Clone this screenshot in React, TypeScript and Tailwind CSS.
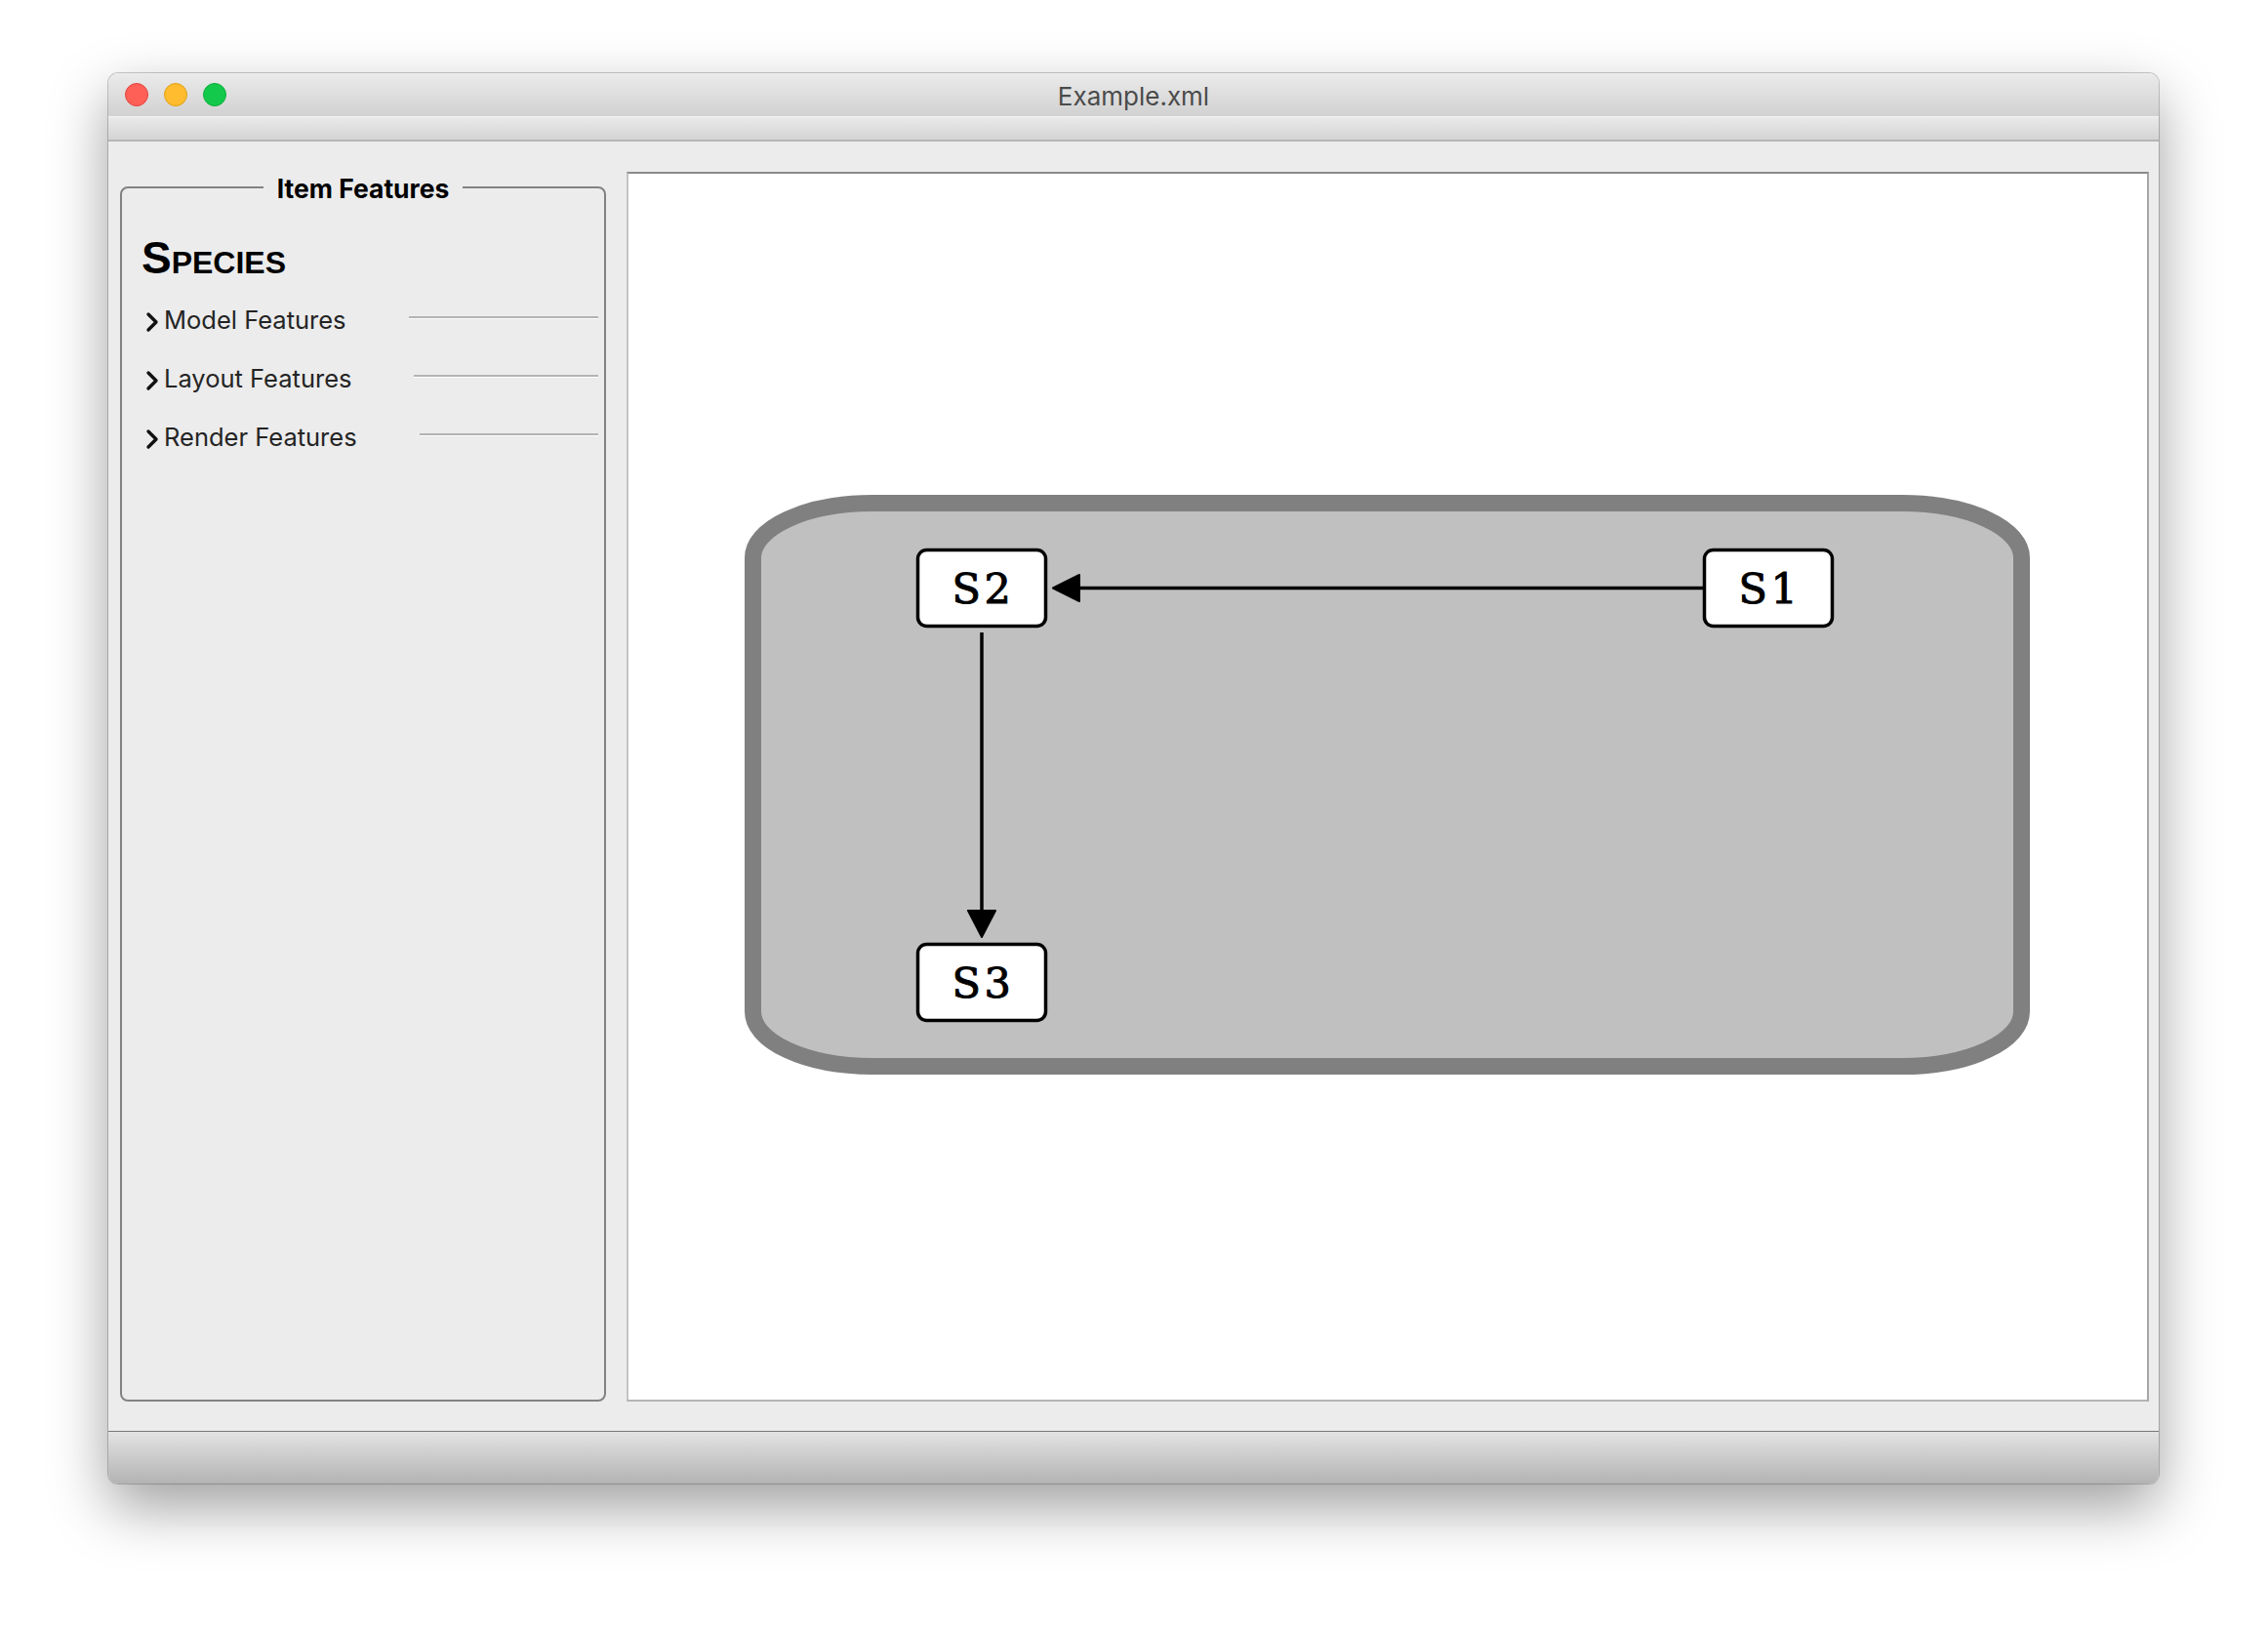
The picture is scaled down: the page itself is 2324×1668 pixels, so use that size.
import React from "react";

const sections = ["Model Features", "Layout Features", "Render Features"];

const Chevron: React.FC = () => (
  <svg width="14" height="22" viewBox="0 0 14 22" className="shrink-0 mt-[3px]">
    <path d="M3 3 L11 11 L3 19" fill="none" stroke="#111" strokeWidth="3.4" strokeLinecap="round" strokeLinejoin="round" />
  </svg>
);

const TrafficLights: React.FC = () => (
  <div className="flex items-center gap-[16px]">
    <span className="w-[24px] h-[24px] rounded-full bg-[#fe5f57] border border-[#e2463f]" />
    <span className="w-[24px] h-[24px] rounded-full bg-[#febc2e] border border-[#e1a116]" />
    <span className="w-[24px] h-[24px] rounded-full bg-[#13c94b] border border-[#10ad3c]" />
  </div>
);

// diagram coords are relative to the canvas content box
const Diagram: React.FC = () => (
  <svg className="absolute left-0 top-0" width="1554" height="1254" viewBox="0 0 1554 1254">
    <rect x="127.5" y="337.5" width="1300" height="577" rx="122" ry="56" fill="#c0c0c0" stroke="#808080" strokeWidth="17" />

    <line x1="1102" y1="424.5" x2="462" y2="424.5" stroke="#000" strokeWidth="3.5" />
    <polygon points="435,424.5 462,411 462,438" fill="#000" stroke="#000" strokeWidth="2" strokeLinejoin="round" />

    <line x1="362" y1="470" x2="362" y2="756" stroke="#000" strokeWidth="3.5" />
    <polygon points="362,782 348,755 376,755" fill="#000" stroke="#000" strokeWidth="2" strokeLinejoin="round" />

    {[
      { x: 296.5, y: 385.5, label: "S2" },
      { x: 1102.5, y: 385.5, label: "S1" },
      { x: 296.5, y: 789.5, label: "S3" },
    ].map((n) => (
      <g key={n.label}>
        <rect x={n.x} y={n.y} width="131" height="78" rx="9" fill="#fff" stroke="#000" strokeWidth="3.5" />
        <text
          x={n.x + 67}
          y={n.y + 54}
          textAnchor="middle"
          fontFamily="'DejaVu Serif', serif"
          fontSize="43"
          letterSpacing="3.5"
          fill="#000"
          stroke="#000"
          strokeWidth="1"
        >
          {n.label}
        </text>
      </g>
    ))}
  </svg>
);

const App: React.FC = () => {
  return (
    <div className="min-h-screen bg-white pt-[75px] pl-[111px] font-['Inter',sans-serif]">
      <div className="w-[2101px] h-[1445px] flex flex-col rounded-[10px] shadow-[0_0_0_1px_rgba(0,0,0,0.2),0_24px_60px_rgba(0,0,0,0.38)]">
        {/* title bar */}
        <div className="relative h-[44px] shrink-0 rounded-t-[10px] bg-gradient-to-b from-[#ebebeb] to-[#d1d1d1] flex items-center px-[17px]">
          <TrafficLights />
          <div className="absolute inset-0 flex items-center justify-center text-[26px] text-[#4b4b4b] leading-none pt-[4px]">
            Example.xml
          </div>
        </div>

        {/* toolbar strip */}
        <div className="h-[26px] shrink-0 border-t border-[#f2f2f2] border-b-2 border-b-[#b6b6b6] bg-gradient-to-b from-[#eaeaea] to-[#d4d4d4]" />

        {/* content */}
        <div className="flex-1 flex gap-[21px] bg-[#ececec] pl-[12px] pr-[10px] pt-[31px] pb-[30px]">
          <fieldset className="w-[498px] shrink-0 border-2 border-[#828282] rounded-[8px]">
            <legend className="mx-auto px-[14px] text-[26.5px] leading-[30px] font-bold text-black pt-[2px]">Item Features</legend>
            <div className="pt-[32px] pl-[20px] pr-[6px]">
              <div className="font-['Liberation_Sans',sans-serif] font-bold text-[46px] leading-[48px] text-black [font-variant:small-caps]">
                Species
              </div>
              <div className="mt-[10px] flex flex-col">
                {sections.map((s) => (
                  <div key={s} className="h-[60px] flex items-center">
                    <div className="ml-[4px] flex items-center gap-[5px]">
                      <Chevron />
                      <span className="text-[25.5px] text-[#242424] whitespace-nowrap">{s}</span>
                    </div>
                    <div className="flex-1 ml-[64px] mb-[6px] h-[3px] border-t-2 border-[#b3b3b3] border-b border-b-white" />
                  </div>
                ))}
              </div>
            </div>
          </fieldset>

          <div className="relative flex-1 bg-white border-2 border-t-[#8a8a8a] border-l-[#c4c4c4] border-r-[#a6a6a6] border-b-[#b4b4b4] overflow-hidden">
            <Diagram />
          </div>
        </div>

        {/* footer */}
        <div className="h-[54px] shrink-0 rounded-b-[10px] border-t border-[#777777] bg-gradient-to-b from-[#e3e3e3] to-[#b3b3b3]" />
      </div>
    </div>
  );
};

export default App;
